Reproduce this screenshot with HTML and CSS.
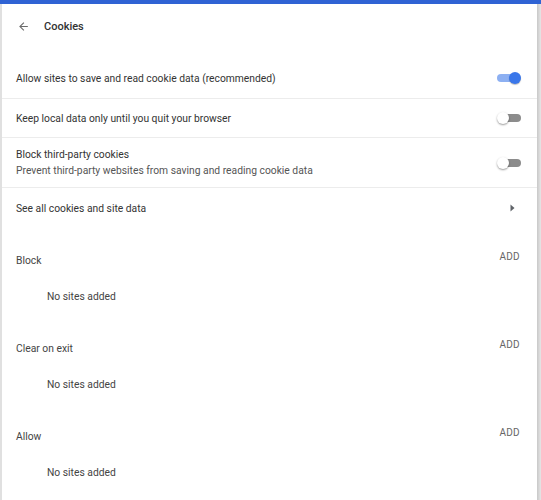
FILE: index.html
```html
<!DOCTYPE html>
<html>
<head>
<meta charset="utf-8">
<link rel="stylesheet" href="styles.css">
</head>
<body>
<div class="topbar"></div>
<div class="frame">
  <div class="card">
    <div class="header">
      <svg class="back" width="13" height="13" viewBox="0 0 24 24"><path d="M20 11H7.83l5.59-5.59L12 4l-8 8 8 8 1.41-1.41L7.83 13H20v-2z" fill="#6b6b6b"/></svg>
      <span class="title">Cookies</span>
    </div>
    <div class="row row1">
      <span class="label">Allow sites to save and read cookie data (recommended)</span>
      <span class="toggle on"><span class="track"></span><span class="knob"></span></span>
    </div>
    <div class="row row2">
      <span class="label">Keep local data only until you quit your browser</span>
      <span class="toggle"><span class="track"></span><span class="knob"></span></span>
    </div>
    <div class="row row3">
      <div class="stack">
        <span class="label">Block third-party cookies</span>
        <span class="sub">Prevent third-party websites from saving and reading cookie data</span>
      </div>
      <span class="toggle"><span class="track"></span><span class="knob"></span></span>
    </div>
    <div class="row row4">
      <span class="label">See all cookies and site data</span>
      <svg class="arrow" width="5" height="8" viewBox="0 0 5 8"><path d="M0.5 0.5 L4.5 4 L0.5 7.5 Z" fill="#5f6368"/></svg>
    </div>
    <div class="section">
      <div class="sec-head"><span class="sec-title">Block</span><span class="add">ADD</span></div>
      <div class="empty">No sites added</div>
    </div>
    <div class="section">
      <div class="sec-head"><span class="sec-title">Clear on exit</span><span class="add">ADD</span></div>
      <div class="empty">No sites added</div>
    </div>
    <div class="section">
      <div class="sec-head"><span class="sec-title">Allow</span><span class="add">ADD</span></div>
      <div class="empty">No sites added</div>
    </div>
  </div>
  <div class="edge"></div>
</div>
</body>
</html>
```
FILE: styles.css
```css
html, body {
  margin: 0;
  padding: 0;
  background: #fff;
  font-family: Roboto, "Liberation Sans", sans-serif;
  color: #333;
  font-size: 10.3px;
  height: 500px;
  overflow: hidden;
}
.topbar {
  height: 4px;
  background: #2f63d4;
}
.frame {
  display: flex;
  height: 496px;
}
.card {
  flex: 1;
  border-left: 2px solid #e0e0e0;
  background: #fff;
}
.edge {
  width: 4px;
  background: linear-gradient(to right, #c8c8c8, #e6e6e6);
}
.header {
  height: 44px;
  display: flex;
  align-items: center;
  padding-left: 15px;
}
.back { margin-right: 14px; }
.title {
  font-size: 11px;
  font-weight: 500;
  color: #333;
}
.row {
  display: flex;
  align-items: center;
  justify-content: space-between;
  padding: 0 16px 0 14px;
  border-bottom: 1px solid #ececec;
}
.row1 { margin-top: 10px; height: 40px; }
.row2 { height: 38px; }
.row3 { height: 49px; }
.row4 { height: 40px; border-bottom: none; padding-right: 22px; }
.label { color: #333; }
.stack { display: flex; flex-direction: column; gap: 3px; }
.sub { color: #555; }
.toggle {
  position: relative;
  width: 24px;
  height: 12px;
  display: inline-block;
}
.track {
  position: absolute;
  left: 2px;
  right: 0;
  top: 2px;
  height: 8px;
  border-radius: 4px;
  background: #8c8c8c;
}
.knob {
  position: absolute;
  top: 0;
  left: 0;
  width: 12px;
  height: 12px;
  border-radius: 50%;
  background: #fff;
  box-shadow: 0 1px 2px rgba(0,0,0,0.4);
}
.toggle.on .track { background: #8db0f2; left: 0; right: 2px; }
.toggle.on .knob { left: auto; right: 0; background: #3a77ea; box-shadow: 0 1px 1px rgba(0,0,0,0.25); }
.section {
  height: 88px;
  display: flex;
  flex-direction: column;
}
.sec-head {
  display: flex;
  justify-content: space-between;
  align-items: flex-start;
  padding: 23px 17px 0 14px;
  height: 32px;
  box-sizing: border-box;
}
.sec-title { color: #444; margin-top: 3px; }
.add {
  color: #666;
  font-size: 10px;
  letter-spacing: 0.3px;
}
.empty {
  padding-left: 45px;
  margin-top: 30px;
  color: #444;
}
```
